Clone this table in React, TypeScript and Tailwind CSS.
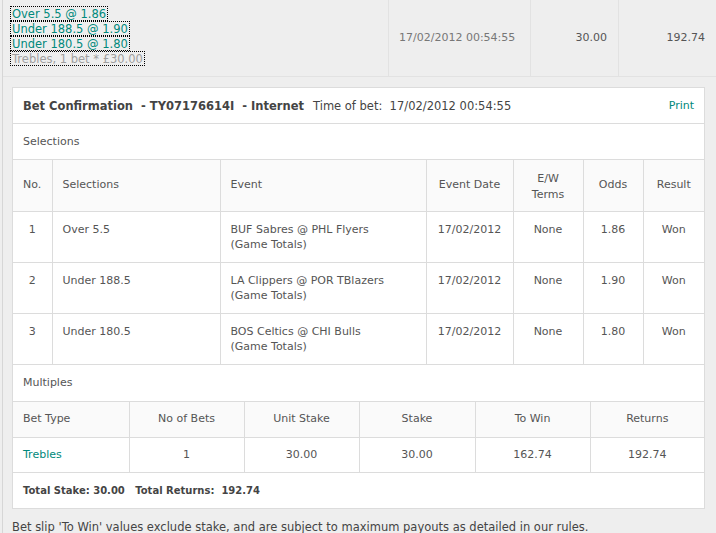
import React from 'react';

const selections = [
  { no: 1, sel: 'Over 5.5', event: 'BUF Sabres @ PHL Flyers', odds: '1.86' },
  { no: 2, sel: 'Under 188.5', event: 'LA Clippers @ POR TBlazers', odds: '1.90' },
  { no: 3, sel: 'Under 180.5', event: 'BOS Celtics @ CHI Bulls', odds: '1.80' },
];

const slipLines = ['Over 5.5 @ 1.86', 'Under 188.5 @ 1.90', 'Under 180.5 @ 1.80'];

export default function App() {
  return (
    <div className="w-[716px] h-[533px] overflow-hidden bg-[#eeeeee] pl-[2px] text-[11px] text-[#555] font-['DejaVu_Sans',Verdana,sans-serif]">
      <div className="h-full border-l border-[#d6d6d6]">
        {/* bet slip summary row */}
        <div className="grid grid-cols-[385px_142px_88px_1fr] h-[77px] border-b border-[#e2e2e2]">
          <div className="pt-[6px] pl-[7px] flex flex-col items-start text-[11.5px]">
            {slipLines.map((l) => (
              <div key={l} className="h-[15px] leading-[14px] px-[1px] border border-dotted border-black text-[#00897b]">
                {l}
              </div>
            ))}
            <div className="h-[15px] leading-[14px] px-[1px] border border-dotted border-black text-[#a0a0a0]">
              Trebles, 1 bet * £30.00
            </div>
          </div>
          <div className="border-l border-[#e2e2e2] flex items-center pl-[10px] text-[#777]">17/02/2012 00:54:55</div>
          <div className="border-l border-[#e2e2e2] flex items-center justify-end pr-[11px]">30.00</div>
          <div className="border-l border-[#e2e2e2] flex items-center justify-end pr-[11px]">192.74</div>
        </div>

        {/* confirmation card */}
        <div className="ml-[9px] mt-[10px] w-[693px] bg-white border border-[#dcdcdc]">
          <div className="h-[36px] flex items-center px-[10px] pt-[2px] border-b border-[#dcdcdc] text-[11.5px] text-[#444]">
            <span className="font-bold">Bet Confirmation&nbsp; - TY07176614I&nbsp; - Internet</span>
            <span className="ml-[9px]">Time of bet:&nbsp; 17/02/2012 00:54:55</span>
            <span className="ml-auto text-[11px] text-[#00897b]">Print</span>
          </div>
          <div className="h-[36px] flex items-center px-[10px] pt-[2px] border-b border-[#dcdcdc]">Selections</div>

          <table className="table-fixed border-collapse w-[691px]">
            <colgroup>
              <col className="w-[39px]" />
              <col className="w-[168px]" />
              <col className="w-[206px]" />
              <col className="w-[87px]" />
              <col className="w-[70px]" />
              <col className="w-[60px]" />
              <col className="w-[61px]" />
            </colgroup>
            <thead>
              <tr className="h-[51px] bg-[#fafafa] border-b border-[#dcdcdc]">
                <th className="font-normal text-left pl-[10px]">No.</th>
                <th className="font-normal text-left pl-[10px] border-l border-[#dcdcdc]">Selections</th>
                <th className="font-normal text-left pl-[10px] border-l border-[#dcdcdc]">Event</th>
                <th className="font-normal text-center border-l border-[#dcdcdc]">Event Date</th>
                <th className="font-normal text-center border-l border-[#dcdcdc] leading-[16px] pt-[3px]">E/W<br />Terms</th>
                <th className="font-normal text-center border-l border-[#dcdcdc]">Odds</th>
                <th className="font-normal text-center border-l border-[#dcdcdc]">Result</th>
              </tr>
            </thead>
            <tbody>
              {selections.map((s) => (
                <tr key={s.no} className="h-[51px] border-b border-[#dcdcdc] align-top leading-[15px]">
                  <td className="pt-[10px] text-center">{s.no}</td>
                  <td className="pt-[10px] pl-[10px] border-l border-[#dcdcdc]">{s.sel}</td>
                  <td className="pt-[10px] pl-[10px] border-l border-[#dcdcdc]">
                    {s.event}
                    <br />
                    (Game Totals)
                  </td>
                  <td className="pt-[10px] text-center border-l border-[#dcdcdc]">17/02/2012</td>
                  <td className="pt-[10px] text-center border-l border-[#dcdcdc]">None</td>
                  <td className="pt-[10px] text-center border-l border-[#dcdcdc]">{s.odds}</td>
                  <td className="pt-[10px] text-center border-l border-[#dcdcdc]">Won</td>
                </tr>
              ))}
            </tbody>
          </table>

          <div className="h-[37px] flex items-center px-[10px] pt-[2px] border-b border-[#dcdcdc]">Multiples</div>

          <table className="table-fixed border-collapse w-[691px]">
            <colgroup>
              <col className="w-[116px]" />
              <col className="w-[115px]" />
              <col className="w-[115px]" />
              <col className="w-[116px]" />
              <col className="w-[115px]" />
              <col className="w-[114px]" />
            </colgroup>
            <thead>
              <tr className="h-[36px] bg-[#fafafa] border-b border-[#dcdcdc]">
                <th className="font-normal text-left pl-[10px]">Bet Type</th>
                <th className="font-normal text-center border-l border-[#dcdcdc]">No of Bets</th>
                <th className="font-normal text-center border-l border-[#dcdcdc]">Unit Stake</th>
                <th className="font-normal text-center border-l border-[#dcdcdc]">Stake</th>
                <th className="font-normal text-center border-l border-[#dcdcdc]">To Win</th>
                <th className="font-normal text-center border-l border-[#dcdcdc]">Returns</th>
              </tr>
            </thead>
            <tbody>
              <tr className="h-[35px] border-b border-[#dcdcdc]">
                <td className="pl-[10px] text-[#00897b]">Trebles</td>
                <td className="text-center border-l border-[#dcdcdc]">1</td>
                <td className="text-center border-l border-[#dcdcdc]">30.00</td>
                <td className="text-center border-l border-[#dcdcdc]">30.00</td>
                <td className="text-center border-l border-[#dcdcdc]">162.74</td>
                <td className="text-center border-l border-[#dcdcdc]">192.74</td>
              </tr>
            </tbody>
          </table>

          <div className="h-[35px] flex items-center px-[10px] font-bold text-[10px] text-[#444]">
            Total Stake: 30.00&nbsp;&nbsp; Total Returns:&nbsp; 192.74
          </div>
        </div>

        <p className="ml-[9px] mt-[10px] text-[11.5px] text-[#444]">
          Bet slip 'To Win' values exclude stake, and are subject to maximum payouts as detailed in our rules.
        </p>
      </div>
    </div>
  );
}
